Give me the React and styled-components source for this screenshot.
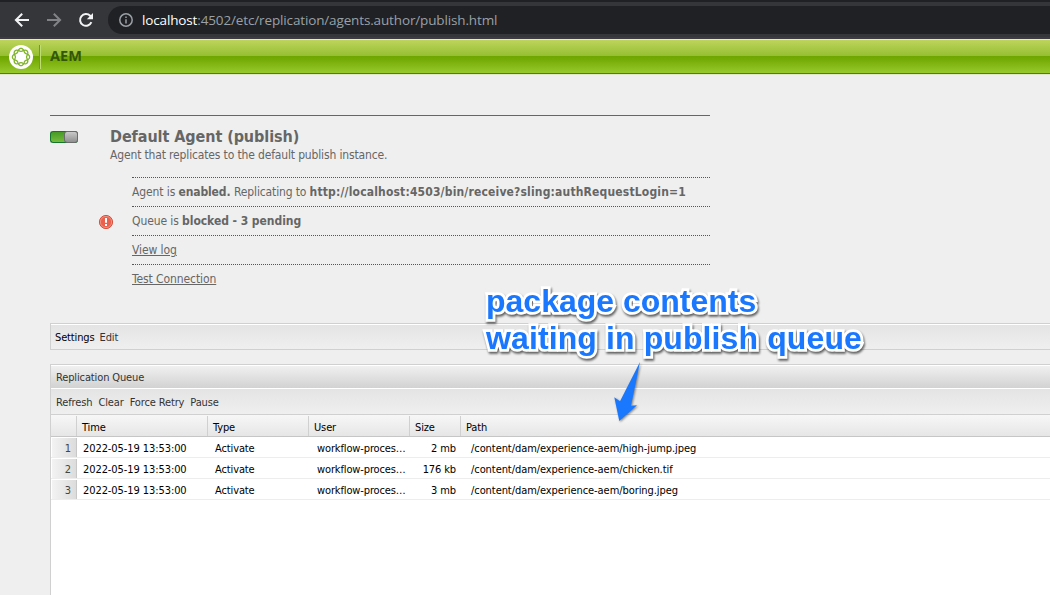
import React from 'react';
import styled, { createGlobalStyle, css } from 'styled-components';

const GlobalStyle = createGlobalStyle`
  html, body { margin: 0; padding: 0; overflow: hidden; background: #efefef; }
  * { box-sizing: border-box; }
`;

const uiFont = '"DejaVu Sans Condensed", "DejaVu Sans", sans-serif';
const chromeFont = '"Open Sans", "Noto Sans", sans-serif';

const Page = styled.div`
  position: relative;
  width: 1050px;
  height: 595px;
  overflow: hidden;
  background: #efefef;
  color: #666;
  font-family: ${uiFont};
`;

/* Browser chrome */
const BrowserBar = styled.div`
  display: flex;
  align-items: center;
  height: 39px;
  padding: 0 0 0 14px;
  background: linear-gradient(#202124 0 2px, #35363a 2px 37px, #3f3a44 37px 39px);
`;
const NavIcons = styled.div`
  display: flex;
  gap: 16px;
  width: 94px;
  padding-top: 1px;
`;
const NavIcon = styled.svg`
  width: 16px;
  height: 16px;
  fill: none;
  stroke: ${(p) => (p.$dim ? '#828387' : '#f1f3f4')};
  stroke-width: 2;
`;
const AddressBar = styled.div`
  display: flex;
  align-items: center;
  flex: 1;
  height: 28px;
  margin-top: 1px;
  padding-left: 11px;
  border-radius: 14px 0 0 14px;
  background: #202124;
`;
const InfoIcon = styled.svg`
  width: 14px;
  height: 14px;
  margin-right: 9px;
  fill: none;
  stroke: #9aa0a6;
  stroke-width: 1.5;
`;
const Url = styled.span`
  font: 13.5px/20px ${chromeFont};
  letter-spacing: -0.14px;
  color: #9aa0a6;
  white-space: nowrap;
`;
const Host = styled.span`
  color: #fff;
`;

/* Green product header */
const Header = styled.header`
  display: flex;
  align-items: center;
  height: 36px;
  padding-left: 9px;
  background: linear-gradient(
    #e3e8cf 0 1px, #bed45c 1px, #95bf32 17px, #6ea500 17px, #74aa04 20px,
    #97c92d 34px, #517e10 34px 35px, #dfe8ce 35px 36px
  );
`;
const Logo = styled.svg`
  width: 24px;
  height: 24px;
`;
const HeaderDivider = styled.div`
  width: 2px;
  height: 24px;
  margin: 0 8px 0 6px;
  border-left: 1px solid #6f9c21;
  border-right: 1px solid #bddc72;
`;
const Product = styled.span`
  padding: 0 0 2px 1px;
  font: bold 14.5px/20px ${chromeFont};
  color: #34560a;
`;

/* Agent summary */
const Agent = styled.section`
  display: grid;
  grid-template-columns: 60px 600px;
  width: 660px;
  height: 208px;
  margin: 40px 0 0 50px;
  border-top: 1px solid #666;
`;
const Toggle = styled.div`
  display: flex;
  justify-content: flex-end;
  width: 28px;
  height: 12px;
  margin-top: 15px;
  border: 1px solid #16752c;
  border-right: 0;
  border-radius: 3px;
  background: linear-gradient(#459a24, #76bb3c);
`;
const Knob = styled.div`
  width: 14px;
  height: 12px;
  margin-top: -1px;
  border: 1px solid #6b6b6b;
  border-radius: 3px;
  background: linear-gradient(#c9c9c9, #909090);
`;
const Title = styled.h1`
  margin: 11px 0 0;
  font: bold 16px/20px ${uiFont};
  letter-spacing: -0.07px;
`;
const Description = styled.p`
  margin: 1px 0 15px;
  font: 12px/14px ${uiFont};
  letter-spacing: -0.15px;
`;
const StatusList = styled.ul`
  margin: 0;
  padding: 0 0 0 22px;
  list-style: none;
`;
const StatusItem = styled.li`
  display: flex;
  height: 29px;
  border-top: 1px dotted #555;
  font: 12px/29px ${uiFont};
  white-space: pre;
`;
const AlertIcon = styled.svg`
  flex: none;
  width: 16px;
  height: 16px;
  margin: 7px 18px 0 -34px;
`;
const StatusText = styled.span`
  letter-spacing: ${(p) => p.$spacing || 0}px;
  font-weight: ${(p) => (p.$bold ? 'bold' : 'normal')};
`;
const StatusLink = styled.a`
  height: 29px;
  letter-spacing: -0.09px;
  text-decoration: underline;
  text-decoration-thickness: 1px;
  text-underline-offset: 1px;
`;

/* Toolbars and queue panel */
const small = css`
  font: 11px/14px ${uiFont};
  letter-spacing: -0.13px;
`;
const SettingsBar = styled.div`
  ${small}
  display: flex;
  align-items: center;
  gap: 5px;
  height: 27px;
  margin-left: 50px;
  padding: 2px 0 0 4px;
  border: 1px solid #d0d0d0;
  border-right: 0;
  background: linear-gradient(#fff 0 1px, #e4e4e4 1px, #efefef);
  color: #000;
`;
const BarAction = styled.span`
  color: #333;
`;
const QueuePanel = styled.section`
  ${small}
  height: 240px;
  margin: 14px 0 0 50px;
  border: 1px solid #d0d0d0;
  border-right: 0;
  background: #fff;
`;
const PanelTitle = styled.div`
  height: 23px;
  padding: 6px 0 0 5px;
  background: linear-gradient(#fff 0 1px, #f0f0f0 1px, #d2d2d2);
  color: #333;
`;
const PanelToolbar = styled.div`
  display: flex;
  gap: 6px;
  height: 27px;
  padding: 8px 0 0 5px;
  border-bottom: 1px solid #d0d0d0;
  background: linear-gradient(#fff 0 1px, #e4e4e4 1px, #efefef);
  color: #333;
`;
const columns = '26px 131px 101px 101px 51px 1fr';
const HeadRow = styled.div`
  display: grid;
  grid-template-columns: ${columns};
  height: 22px;
  padding-top: 1px;
  border-bottom: 1px solid #c6c6c6;
  background: linear-gradient(#f7f7f7, #e6e6e6);
  color: #000;
`;
const HeadCell = styled.div`
  padding: 5px 0 0 5px;
  border-right: 1px solid #d0d0d0;
  &:last-child { border-right: 0; }
`;
const Row = styled.div`
  display: grid;
  grid-template-columns: ${columns};
  height: 21px;
  border-bottom: 1px solid #ededed;
  color: #000;
`;
const Cell = styled.div`
  padding: 5px ${(p) => (p.$right ? 5 : 0)}px 0 ${(p) => p.$pad || 0}px;
  text-align: ${(p) => (p.$right ? 'right' : 'left')};
  letter-spacing: ${(p) => p.$spacing ?? -0.12}px;
  white-space: nowrap;
`;
const NumberCell = styled.div`
  margin: 1px 0 0 1px;
  padding: 4px 5px 0 0;
  border-right: 1px solid #c8c8c8;
  background: linear-gradient(90deg, #f3f3f3, #dcdcdc);
  color: #444;
  text-align: right;
`;

/* Callout drawn over the page */
const Callout = styled.div`
  position: absolute;
  left: 486px;
  top: 283px;
  font: bold 32px/37px "Liberation Sans", Arial, sans-serif;
  color: #1a78ff;
  white-space: pre;
  -webkit-text-stroke: 5.5px #fff;
  stroke-linejoin: round;
  paint-order: stroke fill;
  filter: drop-shadow(1.5px 2px 1.2px rgba(0, 0, 0, 0.6));
`;
const CalloutLine = styled.div`
  letter-spacing: ${(p) => p.$spacing || 0}px;
`;
const Arrow = styled.svg`
  position: absolute;
  left: 608px;
  top: 356px;
  width: 40px;
  height: 72px;
  filter: drop-shadow(1px 1.5px 1px rgba(0, 0, 0, 0.45));
`;

const knot = (phase) =>
  Array.from({ length: 97 }, (_, i) => {
    const a = (i / 96) * Math.PI * 2;
    const r = 7.1 + 1.5 * Math.cos(4 * a + phase);
    return `${i ? 'L' : 'M'}${(12 + r * Math.cos(a)).toFixed(2)} ${(12 + r * Math.sin(a)).toFixed(2)}`;
  }).join('') + 'Z';

const entries = [
  { size: '2 mb', path: '/content/dam/experience-aem/high-jump.jpeg' },
  { size: '176 kb', path: '/content/dam/experience-aem/chicken.tif' },
  { size: '3 mb', path: '/content/dam/experience-aem/boring.jpeg' },
];

export default function App() {
  return (
    <Page>
      <GlobalStyle />
      <BrowserBar>
        <NavIcons>
          <NavIcon viewBox="0 0 16 16"><path d="M15 8H2M8.2 1.7 1.9 8l6.3 6.3" /></NavIcon>
          <NavIcon viewBox="0 0 16 16" $dim><path d="M1 8h13M7.8 1.7 14.1 8l-6.3 6.3" /></NavIcon>
          <NavIcon viewBox="0 0 16 16">
            <path d="M13.4 10.2A5.9 5.9 0 1 1 12.2 3.8L13.5 5.2" />
            <path d="M15 1v6.2H8.8z" fill="#f1f3f4" stroke="none" />
          </NavIcon>
        </NavIcons>
        <AddressBar>
          <InfoIcon viewBox="0 0 14 14">
            <circle cx="7" cy="7" r="6.2" />
            <path d="M7 6.2v4.2M7 3.5v1.5" />
          </InfoIcon>
          <Url><Host>localhost</Host>:4502/etc/replication/agents.author/publish.html</Url>
        </AddressBar>
      </BrowserBar>

      <Header>
        <Logo viewBox="0 0 24 24">
          <circle cx="12" cy="12" r="12" fill="#fff" />
          <g fill="none" stroke="#7fb32a" strokeWidth="1.3">
            <path d={knot(0)} />
            <path d={knot(Math.PI)} />
          </g>
        </Logo>
        <HeaderDivider />
        <Product>AEM</Product>
      </Header>

      <Agent>
        <Toggle><Knob /></Toggle>
        <div>
          <Title>Default Agent (publish)</Title>
          <Description>Agent that replicates to the default publish instance.</Description>
          <StatusList>
            <StatusItem>
              <StatusText $spacing={-0.1}>Agent is </StatusText>
              <StatusText $bold $spacing={-0.13}>enabled. </StatusText>
              <StatusText $spacing={-0.14}>Replicating to </StatusText>
              <StatusText $bold $spacing={0.17}>http://localhost:4503/bin/receive?sling:authRequestLogin=1</StatusText>
            </StatusItem>
            <StatusItem>
              <AlertIcon viewBox="0 0 16 16">
                <circle cx="8" cy="8" r="6.6" fill="#e9604c" stroke="#d4523f" />
                <circle cx="8" cy="8" r="5.6" fill="none" stroke="#f39a8c" strokeWidth="0.8" />
                <path d="M8 4v4.8M8 10v1.9" stroke="#fff" strokeWidth="2" />
              </AlertIcon>
              <StatusText $spacing={-0.1}>Queue is </StatusText>
              <StatusText $bold $spacing={-0.05}>blocked - 3 pending</StatusText>
            </StatusItem>
            <StatusItem><StatusLink>View log</StatusLink></StatusItem>
            <StatusItem><StatusLink>Test Connection</StatusLink></StatusItem>
          </StatusList>
        </div>
      </Agent>

      <SettingsBar>
        <span>Settings</span>
        <BarAction>Edit</BarAction>
      </SettingsBar>

      <QueuePanel>
        <PanelTitle>Replication Queue</PanelTitle>
        <PanelToolbar>
          <span>Refresh</span>
          <span>Clear</span>
          <span>Force Retry</span>
          <span>Pause</span>
        </PanelToolbar>
        <HeadRow>
          <HeadCell />
          <HeadCell>Time</HeadCell>
          <HeadCell>Type</HeadCell>
          <HeadCell>User</HeadCell>
          <HeadCell>Size</HeadCell>
          <HeadCell>Path</HeadCell>
        </HeadRow>
        {entries.map((entry, i) => (
          <Row key={entry.path}>
            <NumberCell>{i + 1}</NumberCell>
            <Cell $pad={6} $spacing={-0.08}>2022-05-19 13:53:00</Cell>
            <Cell $pad={7}>Activate</Cell>
            <Cell $pad={8} $spacing={-0.13}>workflow-proces…</Cell>
            <Cell $right>{entry.size}</Cell>
            <Cell $pad={10} $spacing={-0.07}>{entry.path}</Cell>
          </Row>
        ))}
      </QueuePanel>

      <Callout>
        <CalloutLine>package contents</CalloutLine>
        <CalloutLine $spacing={0.11}>waiting in publish queue</CalloutLine>
      </Callout>
      <Arrow viewBox="608 356 40 72">
        <path d="M640 362 631 405.8 637 405.3 619.3 421 614.3 397.3 620 401.3Z" fill="#1a78ff" />
      </Arrow>
    </Page>
  );
}
